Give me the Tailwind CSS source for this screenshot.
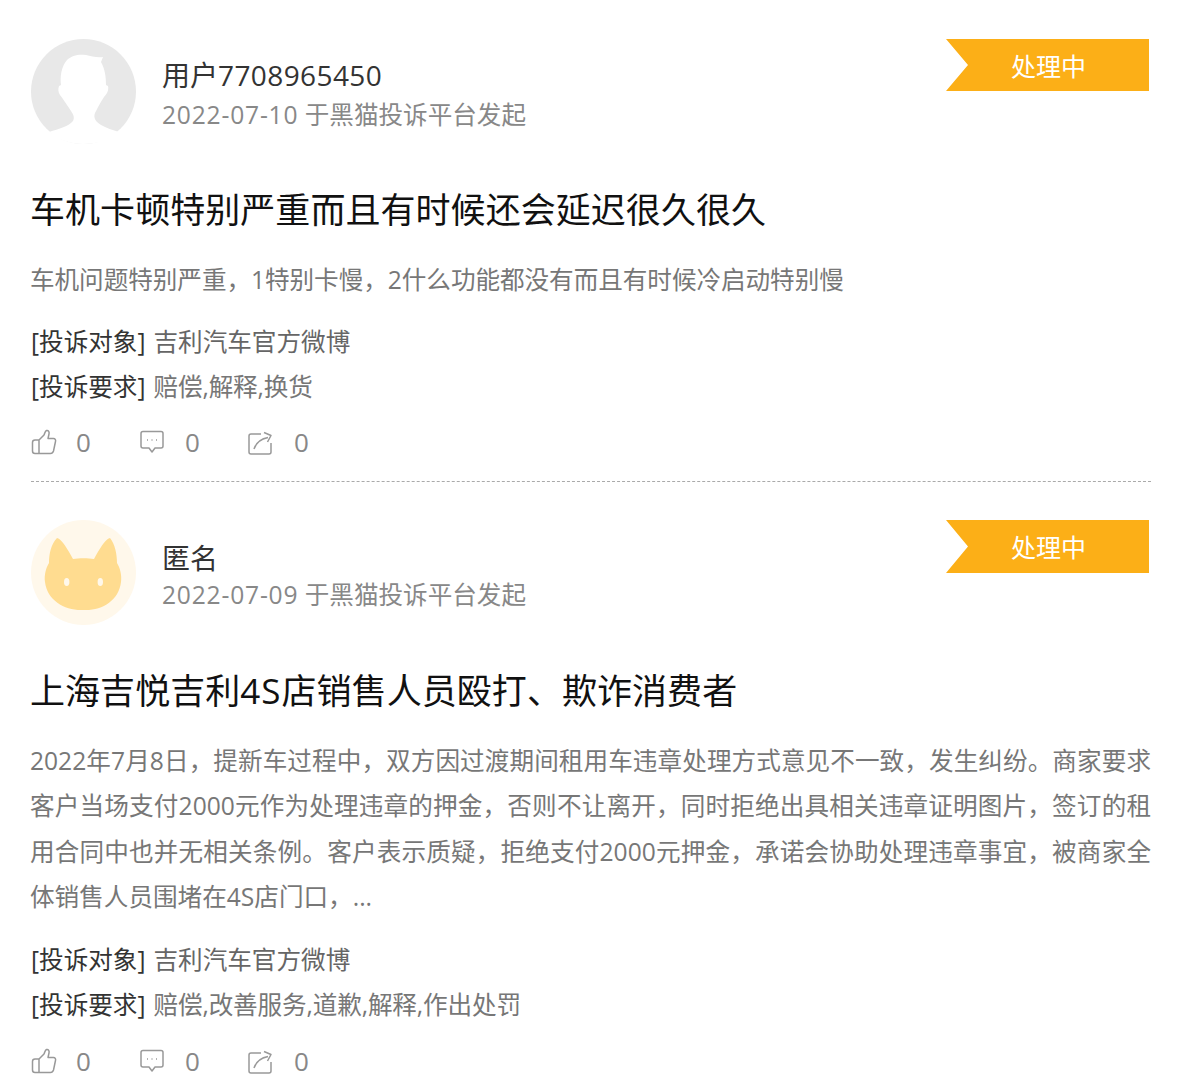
<!DOCTYPE html>
<html lang="zh-CN">
<head>
<meta charset="UTF-8">
<title>投诉列表</title>
<script src="https://cdn.jsdelivr.net/npm/@tailwindcss/browser@4"></script>
</head>
<body class="bg-white h-[1080px] overflow-hidden font-['Open_Sans','Noto_Sans_CJK_SC',sans-serif]">
<div class="pl-[31px] pr-[28px]">

  <!-- first complaint -->
  <div class="pt-[39px] h-[482px] border-b border-dashed border-[#aaa]">
    <div class="flex h-[105px]">
      <svg class="w-[105px] h-[105px] shrink-0 overflow-visible" viewBox="0 0 105 105">
        <circle cx="52.5" cy="52.5" r="52.5" fill="#e8e8e8"/>
        <path d="M18 93C28 90 38 87 42 82C44 78 42 75 40 72C36 66 32 60 29 56C27 53 27 50 28 47L30 46C29 38 30 28 36 21C41 16 48 15 55 16C60 17 66 19 72 18L70 23C74 30 75 38 75 46L77 47C78 51 76 55 73 58C69 64 66 70 64 74C62 79 65 83 70 86C75 89 82 91 88 93C80 101 66 105 52 105C40 105 27 101 18 93Z" fill="#fff"/>
      </svg>
      <div class="ml-[26px] flex-1 min-w-0">
        <p class="mt-[18px] text-[28px] leading-[36px] text-[#333]">用户<span class="tracking-[0.4px]">7708965450</span></p>
        <p class="mt-[4px] text-[24.6px] leading-[36px] text-[#888]"><span class="tracking-[0.8px]">2022-07-10</span> 于黑猫投诉平台发起</p>
      </div>
      <div class="w-[203px] h-[52px] mr-[2px] bg-[#fcaf17] [clip-path:polygon(0_0,100%_0,100%_100%,0_100%,22px_50%)] text-white text-[25px] leading-[54px] text-center pl-[2px] shrink-0">处理中</div>
    </div>
    <h2 class="mt-[44px] -ml-[1px] text-[35px] tracking-[0.05px] leading-[44px] font-normal text-[#111] whitespace-nowrap">车机卡顿特别严重而且有时候还会延迟很久很久</h2>
    <p class="mt-[25px] -ml-[1px] text-[24.6px] tracking-[-0.04px] leading-[45.3px] text-[#777]">车机问题特别严重，1特别卡慢，2什么功能都没有而且有时候冷启动特别慢</p>
    <div class="mt-[17px] text-[24.6px] leading-[45px]">
      <p class="text-[#666]"><span class="text-[#333] mr-[8px]">[投诉对象]</span>吉利汽车官方微博</p>
      <p class="text-[#777]"><span class="text-[#333] mr-[8px]">[投诉要求]</span><span class="tracking-[-0.13px]">赔偿,解释,换货</span></p>
    </div>
    <div class="mt-[16px] flex items-center h-[34px] text-[26px] text-[#888]">
      <svg class="w-[26px] h-[26px]" viewBox="0 0 26 26" fill="none" stroke="#999" stroke-width="1.5" stroke-linejoin="round"><path d="M8 11L13 6C14 4 14 2 15.5 1.5C17.5 1 18.5 3 18 5L17 9.5H22.5C24 9.5 25 11 24.5 12.5L22.5 22C22 23.5 21 24.5 19.5 24.5H4C2.5 24.5 1.500 23.500 1.500 22V13.500C1.500 12 2.500 11 4 11H8V24"/></svg>
      <span class="ml-[19px] w-[64px]">0</span>
      <svg class="w-[24px] h-[24px]" viewBox="0 0 24 24" fill="none" stroke="#999" stroke-width="1.500" stroke-linejoin="round"><path d="M3 1.500H21C22 1.500 23 2.500 23 3.500V16C23 17 22 18 21 18H15L12 22L9 18H3C2 18 1 17 1 16V3.500C1 2.500 2 1.500 3 1.500Z"/><path d="M7 10H8M11.500 10H12.500M16 10H17" stroke-width="1.500"/></svg>
      <span class="ml-[21px] w-[63px]">0</span>
      <svg class="w-[25px] h-[25px]" viewBox="0 0 25 25" fill="none" stroke="#999" stroke-width="1.500" stroke-linejoin="round"><path d="M13 4H3C2 4 1 5 1 6V22C1 23 2 24 3 24H21C22 24 23 23 23 22V13"/><path d="M6 19C8 13 12 9 20 7.500"/><path d="M16 2.500L23 5.500L19.500 12"/></svg>
      <span class="ml-[21px]">0</span>
    </div>
  </div>

  <!-- second complaint -->
  <div class="pt-[38px]">
    <div class="flex h-[105px]">
      <svg class="w-[105px] h-[105px] shrink-0" viewBox="0 0 105 105">
        <circle cx="52.5" cy="52.5" r="52.5" fill="#fff8eb"/>
        <path d="M26 18C31 19 37 30 42 39C48 38 57 38 63 39C68 30 74 19 79 18C84 24 86 34 86 43C89 48 91 55 90 62C88 80 72 90 55 90H50C33 90 16 80 14 62C13 55 15 48 18 43C18 34 20 24 26 18Z" fill="#ffdc90"/>
        <ellipse cx="35.700" cy="62" rx="2.700" ry="4" fill="#fff8eb"/>
        <ellipse cx="69.300" cy="62" rx="2.700" ry="4" fill="#fff8eb"/>
      </svg>
      <div class="ml-[26px] flex-1 min-w-0">
        <p class="mt-[20px] text-[28px] leading-[36px] text-[#333]">匿名</p>
        <p class="mt-[1px] text-[24.6px] leading-[36px] text-[#888]"><span class="tracking-[0.8px]">2022-07-09</span> 于黑猫投诉平台发起</p>
      </div>
      <div class="w-[203px] h-[53px] mr-[2px] bg-[#fcaf17] [clip-path:polygon(0_0,100%_0,100%_100%,0_100%,22px_50%)] text-white text-[25px] leading-[55px] text-center pl-[2px] shrink-0">处理中</div>
    </div>
    <h2 class="mt-[44px] -ml-[1px] text-[35px] tracking-[0.05px] leading-[44px] font-normal text-[#111] whitespace-nowrap">上海吉悦吉利<span class="tracking-[1px]">4S</span>店销售人员殴打、欺诈消费者</h2>
    <p class="mt-[25px] -ml-[1px] text-[24.6px] leading-[45.3px] text-[#777] text-justify">2022年7月8日，提新车过程中，双方因过渡期间租用车违章处理方式意见不一致，发生纠纷。商家要求客户当场支付2000元作为处理违章的押金，否则不让离开，同时拒绝出具相关违章证明图片，签订的租用合同中也并无相关条例。客户表示质疑，拒绝支付2000元押金，承诺会协助处理违章事宜，被商家全体销售人员围堵在4S店门口，...</p>
    <div class="mt-[18px] text-[24.6px] leading-[45px]">
      <p class="text-[#666]"><span class="text-[#333] mr-[8px]">[投诉对象]</span>吉利汽车官方微博</p>
      <p class="text-[#777]"><span class="text-[#333] mr-[8px]">[投诉要求]</span><span class="tracking-[-0.13px]">赔偿,改善服务,道歉,解释,作出处罚</span></p>
    </div>
    <div class="mt-[17px] flex items-center h-[34px] text-[26px] text-[#888]">
      <svg class="w-[26px] h-[26px]" viewBox="0 0 26 26" fill="none" stroke="#999" stroke-width="1.5" stroke-linejoin="round"><path d="M8 11L13 6C14 4 14 2 15.5 1.5C17.5 1 18.5 3 18 5L17 9.5H22.5C24 9.5 25 11 24.5 12.5L22.5 22C22 23.5 21 24.5 19.5 24.5H4C2.5 24.5 1.500 23.500 1.500 22V13.500C1.500 12 2.500 11 4 11H8V24"/></svg>
      <span class="ml-[19px] w-[64px]">0</span>
      <svg class="w-[24px] h-[24px]" viewBox="0 0 24 24" fill="none" stroke="#999" stroke-width="1.500" stroke-linejoin="round"><path d="M3 1.500H21C22 1.500 23 2.500 23 3.500V16C23 17 22 18 21 18H15L12 22L9 18H3C2 18 1 17 1 16V3.500C1 2.500 2 1.500 3 1.500Z"/><path d="M7 10H8M11.500 10H12.500M16 10H17" stroke-width="1.500"/></svg>
      <span class="ml-[21px] w-[63px]">0</span>
      <svg class="w-[25px] h-[25px]" viewBox="0 0 25 25" fill="none" stroke="#999" stroke-width="1.500" stroke-linejoin="round"><path d="M13 4H3C2 4 1 5 1 6V22C1 23 2 24 3 24H21C22 24 23 23 23 22V13"/><path d="M6 19C8 13 12 9 20 7.500"/><path d="M16 2.500L23 5.500L19.500 12"/></svg>
      <span class="ml-[21px]">0</span>
    </div>
  </div>

</div>
</body>
</html>
